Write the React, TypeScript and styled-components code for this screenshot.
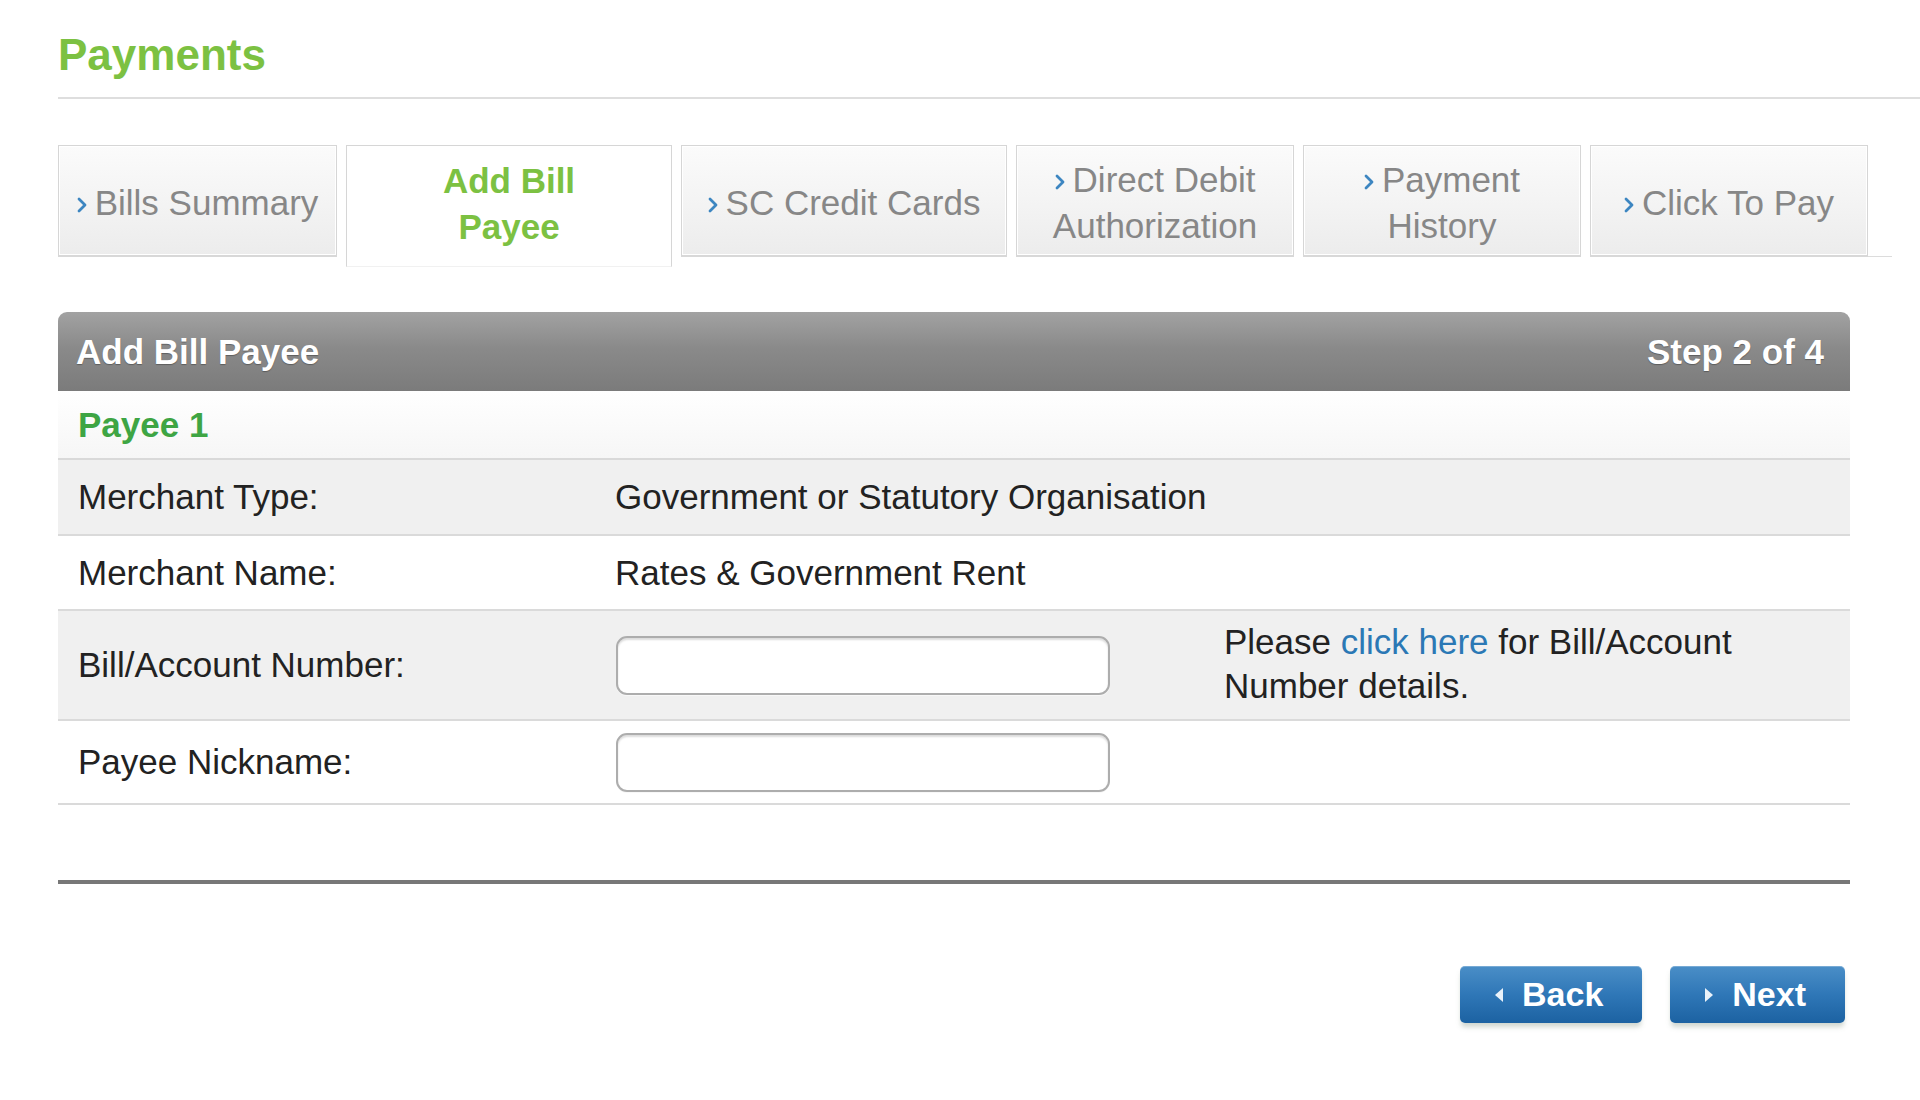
import styled, { createGlobalStyle } from "styled-components";

const GlobalStyle = createGlobalStyle`
  html, body {
    margin: 0;
    padding: 0;
    background: #ffffff;
  }
  body {
    font-family: "Liberation Sans", Arial, Helvetica, sans-serif;
    color: #222222;
  }
`;

type TabItem = { lines: string[]; active?: boolean; width: number };

const tabs: TabItem[] = [
  { lines: ["Bills Summary"], width: 279 },
  { lines: ["Add Bill", "Payee"], active: true, width: 326 },
  { lines: ["SC Credit Cards"], width: 326 },
  { lines: ["Direct Debit", "Authorization"], width: 278 },
  { lines: ["Payment", "History"], width: 278 },
  { lines: ["Click To Pay"], width: 278 },
];

const Chevron = () => (
  <ChevronIcon viewBox="0 0 10 18" width="10" height="18">
    <path d="M2 3 L8 9 L2 15" fill="none" stroke="#3d86c1" strokeWidth="2.8" strokeLinecap="round" strokeLinejoin="round" />
  </ChevronIcon>
);

const App = () => {
  return (
    <Page>
      <GlobalStyle />
      <TitleBar>
        <Title>Payments</Title>
      </TitleBar>

      <TabStrip>
        {tabs.map((t) => (
          <Tab key={t.lines[0]} $active={t.active} $width={t.width}>
            <TabLabel $active={t.active}>
              {!t.active && <Chevron />}
              {t.lines[0]}
              {t.lines[1] && (
                <>
                  <br />
                  {t.lines[1]}
                </>
              )}
            </TabLabel>
          </Tab>
        ))}
        <TabFiller />
      </TabStrip>

      <Panel>
        <PanelHeader>
          <span>Add Bill Payee</span>
          <span>Step 2 of 4</span>
        </PanelHeader>
        <PayeeRow>Payee 1</PayeeRow>

        <FieldRow $shade $height={76}>
          <Label>Merchant Type:</Label>
          <Value>Government or Statutory Organisation</Value>
        </FieldRow>
        <FieldRow $height={75}>
          <Label>Merchant Name:</Label>
          <Value>Rates &amp; Government Rent</Value>
        </FieldRow>
        <FieldRow $shade $height={110}>
          <Label>Bill/Account Number:</Label>
          <Value>
            <TextInput type="text" />
          </Value>
          <Help>
            Please <HelpLink href="#">click here</HelpLink> for Bill/Account
            <br />
            Number details.
          </Help>
        </FieldRow>
        <FieldRow $height={84}>
          <Label>Payee Nickname:</Label>
          <Value>
            <TextInput type="text" />
          </Value>
        </FieldRow>

        <DarkRule />

        <Actions>
          <NavButton>
            <Arrow $dir="left" />
            Back
          </NavButton>
          <NavButton>
            <Arrow $dir="right" />
            Next
          </NavButton>
        </Actions>
      </Panel>
    </Page>
  );
};

const Page = styled.div`
  padding-left: 58px;
  min-height: 1100px;
  box-sizing: border-box;
`;

const TitleBar = styled.div`
  padding-top: 30px;
  padding-bottom: 17px;
  border-bottom: 2px solid #dedede;
`;

const Title = styled.h1`
  margin: 0;
  font-size: 44px;
  line-height: 50px;
  font-weight: bold;
  color: #7cc142;
`;

const TabStrip = styled.div`
  display: flex;
  align-items: flex-start;
  gap: 9px;
  margin-top: 46px;
  margin-right: 28px;
`;

const Tab = styled.div<{ $active?: boolean; $width: number }>`
  box-sizing: border-box;
  flex: 0 0 ${(p) => p.$width}px;
  height: ${(p) => (p.$active ? 122 : 112)}px;
  padding-top: 5px;
  padding-bottom: ${(p) => (p.$active ? 10 : 0)}px;
  display: flex;
  align-items: center;
  justify-content: center;
  border: 1px solid #d6d6d6;
  border-bottom: ${(p) => (p.$active ? "1px solid #f1f1f1" : "2px solid #d8d8d8")};
  background: ${(p) =>
    p.$active ? "#ffffff" : "linear-gradient(#fbfbfb 0%, #f3f3f3 55%, #ececec 100%)"};
  box-shadow: inset 0 0 0 1px #ffffff;
`;

const TabLabel = styled.div<{ $active?: boolean }>`
  text-align: center;
  font-size: 35px;
  line-height: 46px;
  font-weight: ${(p) => (p.$active ? "bold" : "normal")};
  color: ${(p) => (p.$active ? "#7cc142" : "#878787")};
  white-space: nowrap;
`;

const ChevronIcon = styled.svg`
  display: inline-block;
  vertical-align: 1px;
  margin-right: 8px;
`;

const TabFiller = styled.div`
  flex: 1;
  height: 111px;
  border-bottom: 1px solid #dcdcdc;
  margin-left: -9px;
`;

const Panel = styled.div`
  margin-top: 45px;
  margin-right: 70px;
`;

const PanelHeader = styled.div`
  height: 79px;
  display: flex;
  align-items: center;
  justify-content: space-between;
  padding: 0 26px 0 18px;
  border-radius: 9px 9px 0 0;
  background: linear-gradient(#a2a2a2 0%, #8a8a8a 45%, #7b7b7b 100%);
  color: #ffffff;
  font-size: 35px;
  font-weight: bold;
  text-shadow: 0 1px 1px rgba(0, 0, 0, 0.3);
`;

const PayeeRow = styled.div`
  height: 67px;
  display: flex;
  align-items: center;
  padding-left: 20px;
  background: linear-gradient(#ffffff, #f6f6f6);
  border-bottom: 2px solid #d9d9d9;
  color: #3ea544;
  font-size: 35px;
  font-weight: bold;
`;

const FieldRow = styled.div<{ $shade?: boolean; $height: number }>`
  box-sizing: border-box;
  height: ${(p) => p.$height}px;
  display: grid;
  grid-template-columns: 557px 609px 1fr;
  align-items: center;
  background: ${(p) => (p.$shade ? "#f0f0f0" : "#ffffff")};
  border-bottom: 2px solid #dadada;
  font-size: 35px;
  color: #222222;
`;

const Label = styled.div`
  padding-left: 20px;
`;

const Value = styled.div`
  white-space: nowrap;
`;

const TextInput = styled.input`
  box-sizing: border-box;
  display: block;
  width: 494px;
  height: 59px;
  margin: 0 0 0 1px;
  border: 2px solid #adadad;
  border-radius: 11px;
  background: #ffffff;
  box-shadow: inset 0 2px 2px rgba(0, 0, 0, 0.14), 0 1px 0 #f8f8f8;
  font-size: 30px;
  font-family: inherit;
  padding: 0 14px;
  outline: none;
`;

const Help = styled.div`
  line-height: 44px;
  margin-top: -2px;
  white-space: nowrap;
`;

const HelpLink = styled.a`
  color: #2b78b5;
  text-decoration: none;
`;

const DarkRule = styled.div`
  height: 4px;
  margin-top: 75px;
  background: #777777;
`;

const Actions = styled.div`
  display: flex;
  justify-content: flex-end;
  gap: 28px;
  margin-top: 82px;
  padding-right: 5px;
`;

const NavButton = styled.button`
  height: 57px;
  display: flex;
  align-items: center;
  gap: 19px;
  padding: 0 39px 0 35px;
  border: none;
  border-radius: 5px;
  background: linear-gradient(#4a8ec7 0%, #2f77b7 50%, #1c62a2 100%);
  box-shadow: 0 5px 5px -1px rgba(120, 140, 120, 0.35), inset 0 1px 0 rgba(255, 255, 255, 0.25);
  color: #ffffff;
  font-family: inherit;
  font-size: 34px;
  font-weight: bold;
  cursor: pointer;
`;

const Arrow = styled.span<{ $dir: "left" | "right" }>`
  width: 0;
  height: 0;
  border-top: 7px solid transparent;
  border-bottom: 7px solid transparent;
  ${(p) =>
    p.$dir === "left"
      ? "border-right: 8px solid #eaf2fa;"
      : "border-left: 8px solid #eaf2fa;"}
`;

export default App;
